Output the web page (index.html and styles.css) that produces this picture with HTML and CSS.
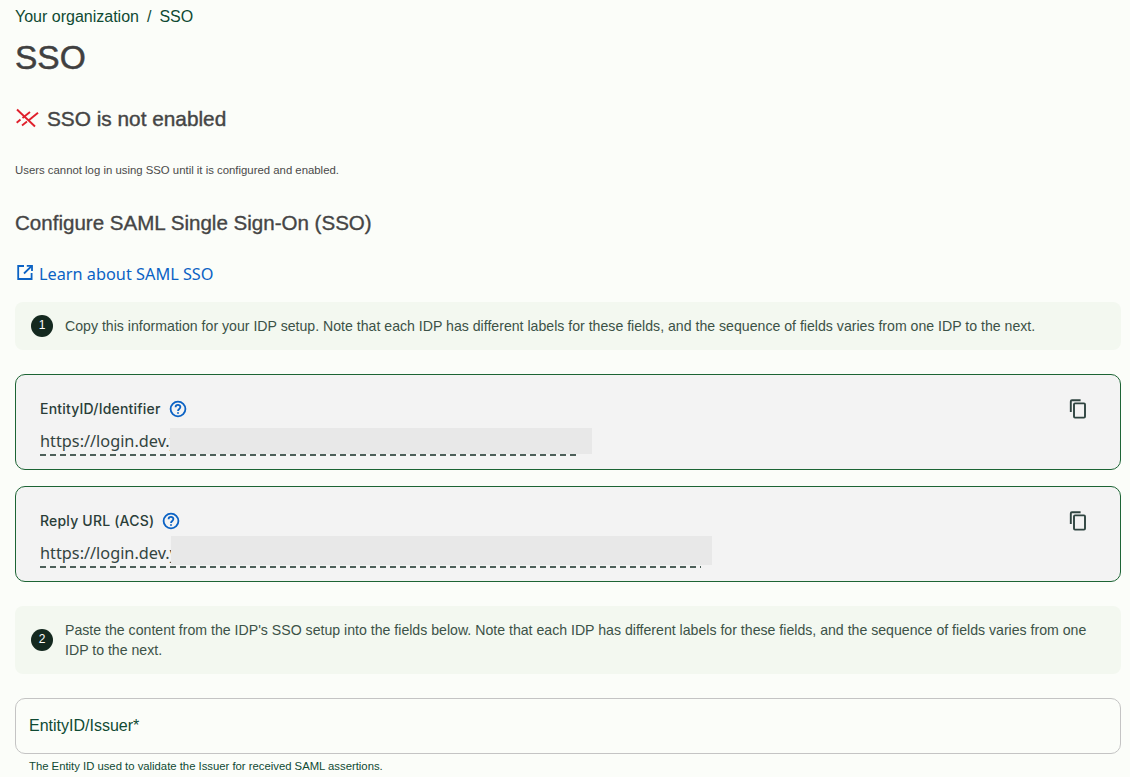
FILE: index.html
```html
<!DOCTYPE html>
<html lang="en">
<head>
<meta charset="utf-8">
<title>SSO</title>
<link rel="stylesheet" href="styles.css">
</head>
<body>
<main class="page">
  <nav class="crumbs"><span>Your organization</span><span class="sep">/</span><span>SSO</span></nav>
  <h1 class="title">SSO</h1>
  <div class="status">
    <svg class="status-icon" width="22" height="18" viewBox="0 0 22 18" fill="none" stroke="#e0202c" stroke-width="1.9">
      <path d="M1 0.5 L19 17.5"/><path d="M12.5 11.5 L22 3.7"/><path d="M6.5 9 L14 3"/><path d="M0.7 13.7 L4.5 10.5"/><path d="M6 16.5 L11 12.5"/>
    </svg>
    <h2 class="status-text">SSO is not enabled</h2>
  </div>
  <p class="note">Users cannot log in using SSO until it is configured and enabled.</p>
  <h2 class="section">Configure SAML Single Sign-On (SSO)</h2>
  <a class="learn" href="#">
    <svg width="18" height="18" viewBox="0 0 18 18" fill="none" stroke="#0b62c4" stroke-width="1.8">
      <path d="M8 3 H2.2 V16 H15.6 V10"/><path d="M8 10.5 L15.8 2.8"/><path d="M10.8 2.8 H16 V8"/>
    </svg>
    <span>Learn about SAML SSO</span>
  </a>
  <section class="step step-one">
    <span class="num">1</span>
    <p>Copy this information for your IDP setup. Note that each IDP has different labels for these fields, and the sequence of fields varies from one IDP to the next.</p>
  </section>
  <div class="copy-card">
    <div class="copy-main">
      <div class="copy-label"><span>EntityID/Identifier</span>
        <svg class="help" width="18" height="18" viewBox="0 0 18 18" fill="none" stroke="#0b62c4" stroke-width="1.8"><circle cx="9" cy="9" r="7.4"/><path d="M6.6 7.2 C6.6 4.2 11.4 4.2 11.4 7.1 C11.4 9 9 8.9 9 11"/><path d="M9 12.2 V13.8"/></svg>
      </div>
      <div class="copy-value value-one">https://login.dev.y<span class="mask mask-one"></span></div>
    </div>
    <svg class="copy-icon" width="20" height="20" viewBox="0 0 20 20" fill="none" stroke="#2f4440" stroke-width="1.9"><path d="M12.6 1.3 H4 Q2.8 1.3 2.8 2.5 V13"/><rect x="6" y="4.4" width="11" height="14.2" rx="1"/></svg>
  </div>
  <div class="copy-card">
    <div class="copy-main">
      <div class="copy-label"><span>Reply URL (ACS)</span>
        <svg class="help" width="18" height="18" viewBox="0 0 18 18" fill="none" stroke="#0b62c4" stroke-width="1.8"><circle cx="9" cy="9" r="7.4"/><path d="M6.6 7.2 C6.6 4.2 11.4 4.2 11.4 7.1 C11.4 9 9 8.9 9 11"/><path d="M9 12.2 V13.8"/></svg>
      </div>
      <div class="copy-value value-two">https://login.dev.y<span class="mask mask-two"></span></div>
    </div>
    <svg class="copy-icon" width="20" height="20" viewBox="0 0 20 20" fill="none" stroke="#2f4440" stroke-width="1.9"><path d="M12.6 1.3 H4 Q2.8 1.3 2.8 2.5 V13"/><rect x="6" y="4.4" width="11" height="14.2" rx="1"/></svg>
  </div>
  <section class="step step-two">
    <span class="num">2</span>
    <p>Paste the content from the IDP's SSO setup into the fields below. Note that each IDP has different labels for these fields, and the sequence of fields varies from one IDP to the next.</p>
  </section>
  <div class="field">EntityID/Issuer*</div>
  <p class="hint">The Entity ID used to validate the Issuer for received SAML assertions.</p>
</main>
</body>
</html>
```
FILE: styles.css
```css
* { box-sizing: border-box; }
html, body { margin: 0; height: 100%; }
body {
  background: #fbfdf9;
  font-family: "Liberation Sans", Arial, sans-serif;
  overflow: hidden;
}
.page { padding: 7px 9px 0 15px; }
.crumbs {
  display: flex;
  gap: 8px;
  font-size: 16px;
  line-height: 19px;
  color: #0f4a33;
}
.title {
  margin: 12px 0 0;
  font-size: 33.5px;
  line-height: 40px;
  font-weight: 400;
  color: #404040;
  -webkit-text-stroke: 0.5px #404040;
}
.status {
  display: flex;
  align-items: center;
  gap: 9px;
  margin-top: 28px;
  height: 26px;
}
.status-icon { margin-left: 1px; margin-top: -2px; overflow: visible; }
.status-text {
  margin: 0;
  font-size: 20.8px;
  line-height: 26px;
  font-weight: 400;
  color: #454545;
  -webkit-text-stroke: 0.4px #454545;
}
.note {
  margin: 31px 0 0;
  font-size: 11.37px;
  line-height: 14px;
  color: #4a4a4a;
}
.section {
  margin: 34px 0 0;
  font-size: 20.55px;
  line-height: 24px;
  font-weight: 400;
  color: #454545;
  -webkit-text-stroke: 0.35px #454545;
}
.learn {
  display: flex;
  align-items: center;
  gap: 5px;
  margin: 28px 0 0 1px;
  height: 22px;
  font-family: "Noto Sans", sans-serif;
  font-size: 16.3px;
  color: #0b62c4;
  text-decoration: none;
}
.learn svg { margin-top: -5px; }
.step {
  display: flex;
  align-items: center;
  gap: 12px;
  margin-top: 17px;
  padding: 0 16px;
  background: #f3f8f0;
  border-radius: 8px;
  font-size: 14.13px;
  line-height: 20px;
  color: #3c5247;
}
.step p { margin: 0; }
.step-one { height: 48px; }
.step-two { height: 68px; margin-top: 24px; }
.num {
  flex: none;
  width: 22px;
  height: 22px;
  border-radius: 50%;
  background: #14291f;
  color: #fff;
  font-size: 12px;
  line-height: 21px;
  text-align: center;
}
.copy-card {
  display: flex;
  justify-content: space-between;
  height: 96px;
  margin-top: 16px;
  padding: 24px 32px 0 24px;
  background: #f3f3f3;
  border: 1px solid #1c6434;
  border-radius: 10px;
}
.step-one + .copy-card { margin-top: 24px; }
.copy-label {
  display: flex;
  align-items: center;
  gap: 8px;
  height: 20px;
  font-family: Inter, sans-serif;
  font-size: 14px;
  font-weight: 500;
  letter-spacing: 0.2px;
  color: #2a3d38;
}
.copy-label span { margin-top: -2px; }
.copy-value {
  position: relative;
  margin-top: 10px;
  height: 27px;
  font-family: "Noto Sans", sans-serif;
  font-size: 16.3px;
  line-height: 24px;
  color: #33443f;
  background: repeating-linear-gradient(90deg, #4d5f59 0 6px, transparent 6px 10px) bottom / 100% 2px no-repeat;
}
.value-one { width: 537px; }
.value-two { width: 661px; }
.mask {
  position: absolute;
  top: -1px;
  left: 130px;
  height: 26px;
  background: #e8e8e8;
}
.mask-one { width: 422px; }
.mask-two { left: 131px; top: -5px; height: 29px; width: 541px; }
.field {
  display: flex;
  align-items: center;
  height: 56px;
  margin-top: 24px;
  padding-left: 13px;
  border: 1px solid #c4c4c4;
  border-radius: 10px;
  font-size: 16px;
  color: #0f4a33;
}
.hint {
  margin: 5px 0 0 14px;
  font-size: 11.3px;
  line-height: 14px;
  color: #0f4a33;
}
```
